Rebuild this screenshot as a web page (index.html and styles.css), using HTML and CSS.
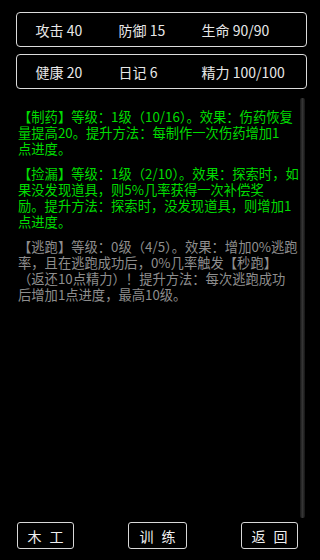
FILE: index.html
```html
<!DOCTYPE html>
<html lang="zh-CN">
<head>
<meta charset="utf-8">
<title>技能</title>
<link rel="stylesheet" href="styles.css">
</head>
<body>
<div class="app">
  <div class="stats">
    <div class="stat-box">
      <span class="stat">攻击 40</span>
      <span class="stat">防御 15</span>
      <span class="stat">生命 90/90</span>
    </div>
    <div class="stat-box">
      <span class="stat">健康 20</span>
      <span class="stat">日记 6</span>
      <span class="stat">精力 100/100</span>
    </div>
  </div>
  <div class="main">
    <div class="log">
      <p class="entry active">【制药】等级：1级（10/16）。效果：伤药恢复<br>量提高20。提升方法：每制作一次伤药增加1<br>点进度。</p>
      <p class="entry active">【捡漏】等级：1级（2/10）。效果：探索时，如<br>果没发现道具，则5%几率获得一次补偿奖<br>励。提升方法：探索时，没发现道具，则增加1<br>点进度。</p>
      <p class="entry inactive">【逃跑】等级：0级（4/5）。效果：增加0%逃跑<br>率，且在逃跑成功后，0%几率触发【秒跑】<br>（返还10点精力）！提升方法：每次逃跑成功<br>后增加1点进度，最高10级。</p>
    </div>
    <div class="scrollbar"></div>
  </div>
  <div class="actions">
    <button class="btn">木 工</button>
    <button class="btn wide">训 练</button>
    <button class="btn">返 回</button>
  </div>
</div>
</body>
</html>
```

FILE: styles.css
```css
html, body {
  margin: 0;
  padding: 0;
  background: #000;
}

.app {
  width: 315px;
  height: 560px;
  display: flex;
  flex-direction: column;
  font-family: "Noto Sans CJK SC", "Noto Sans", sans-serif;
  color: #e6e6e6;
}

.stats {
  display: flex;
  flex-direction: column;
  gap: 7px;
  padding: 12px 8px 0 16px;
}

.stat-box {
  height: 33px;
  border: 1.5px solid #dcdcdc;
  border-radius: 4px;
  display: grid;
  grid-template-columns: 83px 83px auto;
  align-items: center;
  padding-left: 18.5px;
  font-size: 14px;
  color: #e8e8e8;
}

.stat {
  white-space: nowrap;
}

.main {
  margin-top: 9px;
  height: 420px;
  display: flex;
}

.log {
  flex: 1;
  padding: 11px 0 0 18px;
  font-size: 13.3px;
  line-height: 16px;
}

.entry {
  margin: 0 0 9px 0;
  white-space: nowrap;
}

.active {
  color: #00dc00;
}

.inactive {
  color: #8e8e8e;
}

.scrollbar {
  width: 5px;
  margin-right: 10px;
  border-radius: 2px;
  background: linear-gradient(to right, #151515, #353535, #151515);
}

.actions {
  display: flex;
  justify-content: space-between;
  align-items: flex-start;
  padding: 4px 17px 0 17px;
}

.btn {
  width: 57px;
  height: 27px;
  padding: 0;
  background: #000;
  border: 1.3px solid #d8d8d8;
  border-radius: 3px;
  color: #f0f0f0;
  font-family: "Noto Sans CJK SC", "Noto Sans", sans-serif;
  font-size: 14px;
  word-spacing: 5px;
  line-height: 1;
}

.btn.wide {
  width: 59px;
}
```
